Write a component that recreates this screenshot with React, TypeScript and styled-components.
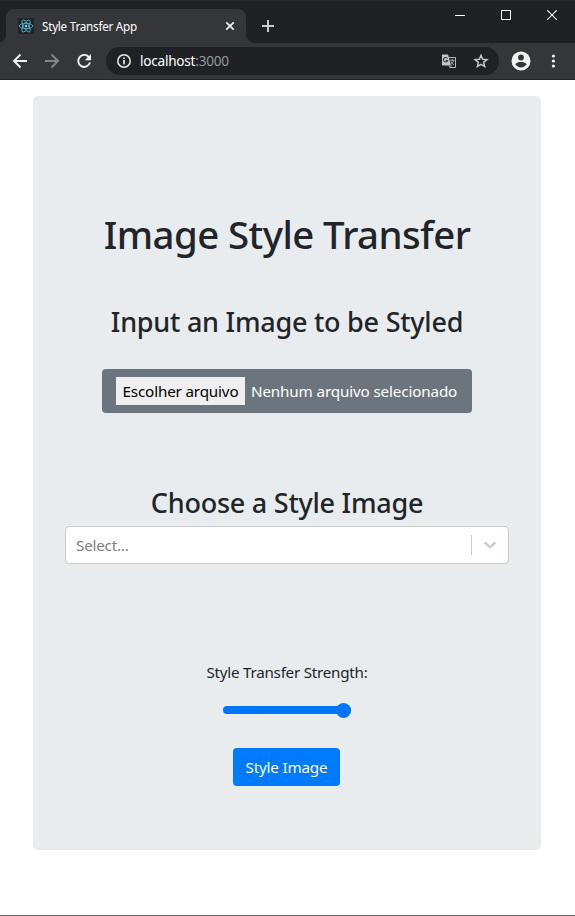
import React, { useState } from "react";
import styled, { createGlobalStyle } from "styled-components";

const GlobalStyle = createGlobalStyle`
  *, *::before, *::after { box-sizing: border-box; }
  body {
    margin: 0;
    background: #fff;
    color: #212529;
    font-family: "Noto Sans", "Open Sans", sans-serif;
    font-size: 15.2px;
    line-height: 24px;
  }
  button, input { font: inherit; }
`;

const Window = styled.div`
  display: flex;
  flex-direction: column;
  height: 916px;
  border-bottom: 1px solid #6b6b6d;
`;

const TabStrip = styled.header`
  display: flex;
  align-items: flex-end;
  height: 43px;
  padding-left: 6px;
  background: #202124;
  border-top: 1px solid #292a2b;
`;

const Tab = styled.div`
  position: relative;
  display: flex;
  align-items: center;
  width: 240px;
  height: 34px;
  padding: 0 10px 0 12px;
  border-radius: 8px 8px 0 0;
  background: #35363a;
  color: #fff;

  &::before, &::after {
    content: "";
    position: absolute;
    bottom: 0;
    width: 8px;
    height: 8px;
  }
  &::before {
    right: 100%;
    background: radial-gradient(circle at 0 0, transparent 7.5px, #35363a 8px);
  }
  &::after {
    left: 100%;
    background: radial-gradient(circle at 100% 0, transparent 7.5px, #35363a 8px);
  }
`;

const TabTitle = styled.span`
  flex: 1;
  margin-left: 8px;
  font-size: 11.7px;
  line-height: 16px;
  letter-spacing: -0.25px;
  white-space: nowrap;
`;

const Icon = styled.svg`
  display: block;
  flex: none;
`;

const NewTab = styled.div`
  align-self: center;
  margin: 8px 0 0 16px;
`;

const WindowControls = styled.div`
  display: flex;
  align-self: flex-start;
  margin-left: auto;
`;

const WindowControl = styled.div`
  display: flex;
  align-items: center;
  justify-content: center;
  width: 46px;
  height: 28px;
`;

const Toolbar = styled.div`
  display: flex;
  align-items: center;
  height: 37px;
  padding: 0 13px 0 12px;
  background: #35363a;
  border-bottom: 1px solid #232326;
`;

const NavButtons = styled.div`
  display: flex;
  gap: 16px;
`;

const AddressBar = styled.div`
  display: flex;
  align-items: center;
  width: 393px;
  height: 28px;
  margin-left: 14px;
  padding: 0 10px;
  border-radius: 14px;
  background: #202124;
`;

const Url = styled.span`
  flex: 1;
  margin-left: 8px;
  font-size: 13.6px;
  line-height: 20px;
  letter-spacing: -0.24px;
  color: #fff;
`;

const Port = styled.span`
  color: #92969b;
`;

const AddressActions = styled.div`
  display: flex;
  align-items: center;
  gap: 16px;
`;

const BrowserMenu = styled.div`
  display: flex;
  align-items: center;
  gap: 20px;
  margin-left: 12px;
`;

const Jumbotron = styled.main`
  display: flex;
  flex-direction: column;
  align-items: center;
  width: 508px;
  height: 754px;
  margin: 16px 0 0 33px;
  padding: 114px 32px 0;
  border-radius: 5px;
  background: #e9ecef;
`;

const Title = styled.h1`
  margin: 0;
  font-size: 38.4px;
  font-weight: 500;
  line-height: 48px;
  letter-spacing: -0.57px;
  white-space: nowrap;
`;

const Subtitle = styled.h3<{ $gap: number }>`
  margin: ${(p) => p.$gap}px 0 0;
  font-size: 27px;
  font-weight: 500;
  line-height: 34px;
  letter-spacing: -0.24px;
  white-space: nowrap;
`;

const FilePicker = styled.div`
  display: flex;
  align-items: center;
  gap: 6px;
  width: 370px;
  height: 44px;
  margin-top: 30px;
  padding-left: 14px;
  border-radius: 4px;
  background: #6c757d;
  color: #fff;
  white-space: nowrap;
  letter-spacing: -0.13px;
`;

const ChooseFile = styled.button`
  width: 129px;
  height: 28px;
  margin: 0;
  padding: 0;
  border: 0;
  background: #efefef;
  color: #000;
  line-height: 24px;
  letter-spacing: -0.15px;
`;

const Select = styled.div`
  display: flex;
  align-items: center;
  width: 444px;
  height: 38px;
  margin-top: 6px;
  padding-left: 10px;
  border: 1px solid #ccc;
  border-radius: 4px;
  background: #fff;
`;

const Placeholder = styled.span`
  flex: 1;
  color: #808080;
  letter-spacing: -0.2px;
`;

const Separator = styled.span`
  width: 1px;
  height: 20px;
  background: #ccc;
`;

const Indicator = styled.span`
  display: flex;
  justify-content: center;
  width: 36px;
`;

const StrengthLabel = styled.label`
  margin-top: 96px;
  letter-spacing: -0.24px;
`;

const Slider = styled.input`
  appearance: none;
  width: 128px;
  height: 16px;
  margin: 18px 0 0;
  background: transparent;

  &::-webkit-slider-runnable-track {
    height: 8px;
    border-radius: 4px;
    background: #0075ff;
  }
  &::-webkit-slider-thumb {
    appearance: none;
    width: 15px;
    height: 15px;
    margin-top: -3.5px;
    border-radius: 50%;
    background: #0075ff;
  }
`;

const SubmitButton = styled.button`
  width: 107px;
  height: 38px;
  margin: 30px 1px 0 0;
  padding: 0;
  border: 0;
  border-radius: 4px;
  background: #007bff;
  color: #fff;
  letter-spacing: -0.18px;
`;

const ReactLogo = () => (
  <Icon width="16" height="16" viewBox="0 0 16 16">
    <rect width="16" height="16" rx="1" fill="#20232a" />
    <g fill="none" stroke="#61dafb" strokeWidth="0.85" opacity="0.8">
      <ellipse cx="8" cy="8" rx="6.8" ry="2.7" />
      <ellipse cx="8" cy="8" rx="6.8" ry="2.7" transform="rotate(60 8 8)" />
      <ellipse cx="8" cy="8" rx="6.8" ry="2.7" transform="rotate(120 8 8)" />
    </g>
    <circle cx="8" cy="8" r="1.3" fill="#61dafb" />
  </Icon>
);

const TranslateIcon = () => (
  <Icon width="16" height="16" viewBox="0 0 16 16">
    <path d="M7 4.5h7.5v10H9" fill="none" stroke="#b4b6b9" />
    <path d="M1 1.500h6l3 11H2a1 1 0 0 1-1-1z" fill="#c4c6c9" />
    <path d="M6.500 5.600A2.200 2.200 0 1 0 6.700 7.500H4.700" fill="none" stroke="#303134" strokeWidth="1.100" />
    <path d="M9 7.300h4.500M11.200 6v1.300M12.600 7.400c-.5 1.900-1.500 3-2.600 3.900M10 8.600c.7 1.400 1.600 2.400 3 3.200M8 12.500l1 2 1.800-2" fill="none" stroke="#b4b6b9" strokeWidth=".9" />
  </Icon>
);

export default function App() {
  const [strength, setStrength] = useState(100);

  return (
    <>
      <GlobalStyle />
      <Window>
        <TabStrip>
          <Tab>
            <ReactLogo />
            <TabTitle>Style Transfer App</TabTitle>
            <Icon width="12" height="12" viewBox="0 0 12 12">
              <path d="M2.3 2.3l7.4 7.4M9.7 2.3L2.3 9.7" stroke="#f1f3f4" strokeWidth="1.7" />
            </Icon>
          </Tab>
          <NewTab>
            <Icon width="12" height="12" viewBox="0 0 12 12">
              <path d="M0 6h12M6 0v12" stroke="#c8cacc" strokeWidth="2" />
            </Icon>
          </NewTab>
          <WindowControls>
            <WindowControl>
              <Icon width="10" height="10" viewBox="0 0 10 10">
                <path d="M0 5.5h10" stroke="#fff" />
              </Icon>
            </WindowControl>
            <WindowControl>
              <Icon width="10" height="10" viewBox="0 0 10 10">
                <path d="M.5.5h9v9h-9z" fill="none" stroke="#fff" />
              </Icon>
            </WindowControl>
            <WindowControl>
              <Icon width="10" height="10" viewBox="0 0 10 10">
                <path d="M.2.2l9.6 9.6M9.8.2L.2 9.8" stroke="#fff" strokeWidth="1.1" />
              </Icon>
            </WindowControl>
          </WindowControls>
        </TabStrip>

        <Toolbar>
          <NavButtons>
            <Icon width="16" height="16" viewBox="0 0 16 16">
              <path d="M15 8H2.5M8.5 1.5L2 8l6.5 6.5" fill="none" stroke="#f1f3f4" strokeWidth="1.9" />
            </Icon>
            <Icon width="16" height="16" viewBox="0 0 16 16">
              <path d="M1 8h12.5M7.5 1.5L14 8l-6.5 6.5" fill="none" stroke="#85868a" strokeWidth="1.9" />
            </Icon>
            <Icon width="16" height="16" viewBox="0 0 16 16">
              <path d="M13.2 4.5A6 6 0 1 0 14 9.6" fill="none" stroke="#f1f3f4" strokeWidth="1.9" />
              <path d="M15 1v6.2H8.800z" fill="#f1f3f4" />
            </Icon>
          </NavButtons>
          <AddressBar>
            <Icon width="16" height="16" viewBox="0 0 16 16">
              <circle cx="8" cy="8" r="6.2" fill="none" stroke="#e8eaed" strokeWidth="1.5" />
              <path d="M8 7v4.5M8 4.4V6" stroke="#e8eaed" strokeWidth="1.7" />
            </Icon>
            <Url>
              localhost<Port>:3000</Port>
            </Url>
            <AddressActions>
              <TranslateIcon />
              <Icon width="16" height="16" viewBox="0 0 16 16">
                <path
                  d="M8 2.300l1.650 3.900 4.250.360-3.220 2.800.960 4.140L8 11.300l-3.640 2.200.960-4.140L2.100 6.560l4.250-.360z"
                  fill="none"
                  stroke="#c4c6c9"
                  strokeWidth="1.5"
                />
              </Icon>
            </AddressActions>
          </AddressBar>
          <BrowserMenu>
            <Icon width="20" height="20" viewBox="0 0 20 20">
              <circle cx="10" cy="10" r="9.5" fill="#f1f3f4" />
              <circle cx="10" cy="6.5" r="2.9" fill="#35363a" />
              <path d="M4.3 13.2C5 11.5 8 10.9 10 10.9s5 .6 5.7 2.3A6.9 6.9 0 0 1 10 16.4a6.9 6.9 0 0 1-5.7-3.2z" fill="#35363a" />
            </Icon>
            <Icon width="4" height="16" viewBox="0 0 4 16">
              <g fill="#f1f3f4">
                <circle cx="2.4" cy="3" r="1.6" />
                <circle cx="2.4" cy="8" r="1.6" />
                <circle cx="2.4" cy="13" r="1.6" />
              </g>
            </Icon>
          </BrowserMenu>
        </Toolbar>

        <Jumbotron>
          <Title>Image Style Transfer</Title>
          <Subtitle $gap={47}>Input an Image to be Styled</Subtitle>
          <FilePicker>
            <ChooseFile type="button">Escolher arquivo</ChooseFile>
            <span>Nenhum arquivo selecionado</span>
          </FilePicker>
          <Subtitle $gap={73}>Choose a Style Image</Subtitle>
          <Select>
            <Placeholder>Select...</Placeholder>
            <Separator />
            <Indicator>
              <Icon width="20" height="20" viewBox="0 0 20 20">
                <path
                  d="M5.300 8L10 12.300 14.700 8"
                  fill="none"
                  stroke="#ccc"
                  strokeWidth="2.400"
                  strokeLinecap="round"
                  strokeLinejoin="round"
                />
              </Icon>
            </Indicator>
          </Select>
          <StrengthLabel htmlFor="strength">Style Transfer Strength:</StrengthLabel>
          <Slider
            id="strength"
            type="range"
            min={0}
            max={100}
            value={strength}
            onChange={(e) => setStrength(Number(e.target.value))}
          />
          <SubmitButton type="button">Style Image</SubmitButton>
        </Jumbotron>
      </Window>
    </>
  );
}
